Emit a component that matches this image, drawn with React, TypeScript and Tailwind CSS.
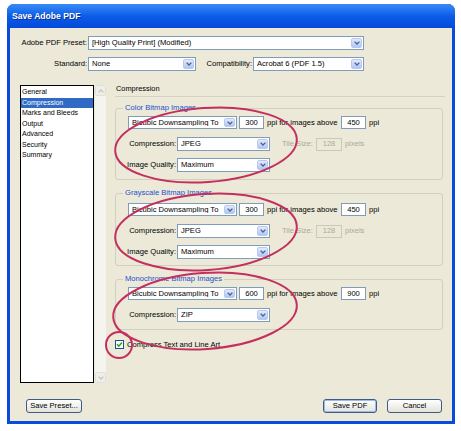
import React from 'react';

const Chevron = ({ color = '#4D6185' }: { color?: string }) => (
  <svg width="6" height="4" viewBox="0 0 6 4">
    <path d="M0.6 0.6 L3 3 L5.4 0.6" stroke={color} strokeWidth="1.3" fill="none" />
  </svg>
);

const Select = ({ value, className }: { value: string; className: string }) => (
  <div className={`flex items-center border border-[#7F9DB9] bg-white ${className}`}>
    <span className="flex-1 truncate pl-[3px] leading-none">{value}</span>
    <span className="mr-px flex h-[calc(100%-2px)] w-[11px] items-center justify-center rounded-[2px] border border-[#B7C9F0] bg-linear-to-b from-[#E2EAFD] to-[#B2C6F4]">
      <Chevron />
    </span>
  </div>
);

const Box = ({ children, disabled = false, className = '' }: { children: React.ReactNode; disabled?: boolean; className?: string }) => (
  <div
    className={`flex h-[13px] items-center justify-center border ${
      disabled ? 'border-[#CAC8BB] text-[#ACA899]' : 'border-[#7F9DB9] bg-white'
    } ${className}`}
  >
    {children}
  </div>
);

const Group = ({ title, className, children }: { title: string; className: string; children: React.ReactNode }) => (
  <div className={`relative rounded-[3px] border border-[#D0D0BF] pl-[12px] ${className}`}>
    {/* legend sits on the border */}
    <span className="absolute -top-[6px] left-[7px] bg-[#ECE9D8] px-[2px] leading-[10px] text-[#1C4FD0]">{title}</span>
    {children}
  </div>
);

const Downsample = ({ res, above }: { res: string; above: string }) => (
  <div className="flex h-[13px] items-center">
    <Select className="h-[13px] w-[109px]" value="Bicubic Downsampling To" />
    <Box className="ml-[2px] w-[25px]">{res}</Box>
    <span className="ml-[3px] w-[74px] whitespace-nowrap">ppi for images above</span>
    <Box className="w-[25px]">{above}</Box>
    <span className="ml-[3px]">ppi</span>
  </div>
);

const LabeledSelect = ({ label, value, tile = false, className }: { label: string; value: string; tile?: boolean; className: string }) => (
  <div className={`flex h-[14px] items-center ${className}`}>
    <span className="flex w-[48px] justify-end whitespace-nowrap">{label}</span>
    <Select className="ml-px h-[14px] w-[93px]" value={value} />
    {tile && (
      <>
        <span className="ml-[12px] w-[34px] whitespace-nowrap text-[#ACA899]">Tile Size:</span>
        <Box disabled className="w-[26px]">128</Box>
        <span className="ml-[3px] text-[#ACA899]">pixels</span>
      </>
    )}
  </div>
);

const Button = ({ label, className, isDefault = false }: { label: string; className: string; isDefault?: boolean }) => (
  <div
    className={`flex h-[14px] items-center justify-center rounded-[3px] border border-[#3D5A8A] bg-linear-to-b from-white to-[#E3E2DA] ${
      isDefault ? 'shadow-[inset_0_0_0_1px_#9DBBEE]' : ''
    } ${className}`}
  >
    {label}
  </div>
);

const ScrollBtn = ({ up }: { up: boolean }) => (
  <div className="flex h-[11px] w-[11px] items-center justify-center rounded-[2px] border border-[#E0DFD8] bg-[#EFEEE8]">
    <span className={up ? 'rotate-180' : ''}>
      <Chevron color="#C4C3BC" />
    </span>
  </div>
);

const sections = ['General', 'Compression', 'Marks and Bleeds', 'Output', 'Advanced', 'Security', 'Summary'];

export default function App() {
  return (
    <div className="relative h-[431px] w-[461px] overflow-hidden bg-white pl-[7px] pt-[4px] font-['Liberation_Sans',Arial,sans-serif] text-[7.6px] text-black">
      <div className="flex h-[420px] w-[448px] flex-col overflow-hidden rounded-t-[7px] bg-[#0A4BDB]">
        {/* title bar */}
        <div className="flex h-[24px] items-center bg-linear-to-b from-[#3A8BF6] via-[#0B5CE8] to-[#0549D9] pl-[5px] text-[8.6px] font-bold text-white [text-shadow:1px_1px_0_#0A2F8F]">
          Save Adobe PDF
        </div>

        <div className="mx-[3px] mb-[3px] flex flex-1 flex-col bg-[#ECE9D8] pt-[8px]">
          <div className="flex h-[14px] items-center">
            <span className="w-[77px] text-right">Adobe PDF Preset:</span>
            <Select className="ml-px h-[14px] w-[276px]" value="[High Quality Print] (Modified)" />
          </div>
          <div className="mt-[7px] flex h-[14px] items-center">
            <span className="w-[77px] text-right">Standard:</span>
            <Select className="ml-px h-[14px] w-[108px]" value="None" />
            <span className="w-[56px] text-right">Compatibility:</span>
            <Select className="ml-px h-[14px] w-[111px]" value="Acrobat 6 (PDF 1.5)" />
          </div>

          <div className="mt-[14px] flex h-[298px] pl-[10px]">
            {/* section list */}
            <div className="h-full w-[74px] border border-black bg-white pt-px text-[7px]">
              {sections.map(s => (
                <div
                  key={s}
                  className={`h-[10.5px] pl-px leading-[10.5px] ${s === 'Compression' ? 'bg-[#316AC5] text-white' : ''}`}
                >
                  {s}
                </div>
              ))}
            </div>
            <div className="ml-px flex h-full w-[11px] flex-col justify-between bg-[#F5F4EF]">
              <ScrollBtn up />
              <ScrollBtn up={false} />
            </div>

            {/* compression panel */}
            <div className="ml-[9px] flex w-[328px] flex-col">
              <div className="-mt-px h-[10px] pl-px text-[7.4px] leading-[10px]">Compression</div>
              <div className="mt-[2px] h-px w-[330px] bg-[#D5D2C3]" />

              <Group title="Color Bitmap Images" className="mt-[11px] pb-[7px] pt-[7px]">
                <Downsample res="300" above="450" />
                <LabeledSelect label="Compression:" value="JPEG" tile className="mt-[8px]" />
                <LabeledSelect label="Image Quality:" value="Maximum" className="mt-[7px]" />
              </Group>

              <Group title="Grayscale Bitmap Images" className="mt-[13px] pb-[6px] pt-[9px]">
                <Downsample res="300" above="450" />
                <LabeledSelect label="Compression:" value="JPEG" tile className="mt-[8px]" />
                <LabeledSelect label="Image Quality:" value="Maximum" className="mt-[7px]" />
              </Group>

              <Group title="Monochrome Bitmap Images" className="mt-[13px] pb-[7px] pt-[7px]">
                <Downsample res="600" above="900" />
                <LabeledSelect label="Compression:" value="ZIP" className="mt-[8px]" />
              </Group>

              <div className="mt-[10px] flex h-[9px] items-center">
                <div className="flex h-[9px] w-[9px] items-center justify-center border border-[#1C5180] bg-white">
                  <svg width="7" height="7" viewBox="0 0 7 7">
                    <path d="M1 3.3 L2.8 5.2 L6 1.6" stroke="#21A121" strokeWidth="1.5" fill="none" />
                  </svg>
                </div>
                <span className="ml-[3px]">Compress Text and Line Art</span>
              </div>
            </div>
          </div>

          <div className="mt-[16px] flex h-[14px] pl-[16px] pr-[10px]">
            <Button label="Save Preset..." className="w-[56px]" />
            <Button label="Save PDF" className="ml-auto w-[54px]" isDefault />
            <Button label="Cancel" className="ml-[10px] w-[55px]" />
          </div>
        </div>
      </div>

      {/* red annotation marks drawn over the dialog */}
      <svg className="pointer-events-none absolute inset-0" width="461" height="431" viewBox="0 0 461 431">
        <g stroke="#C4305E" strokeWidth="2" fill="none">
          <ellipse cx="206" cy="145" rx="91" ry="37" transform="rotate(-4 206 145)" />
          <ellipse cx="206" cy="232" rx="91" ry="38" transform="rotate(-4 206 232)" />
          <ellipse cx="205" cy="311" rx="92" ry="38" transform="rotate(-4 205 311)" />
          <circle cx="119" cy="345" r="13" />
        </g>
      </svg>
    </div>
  );
}
